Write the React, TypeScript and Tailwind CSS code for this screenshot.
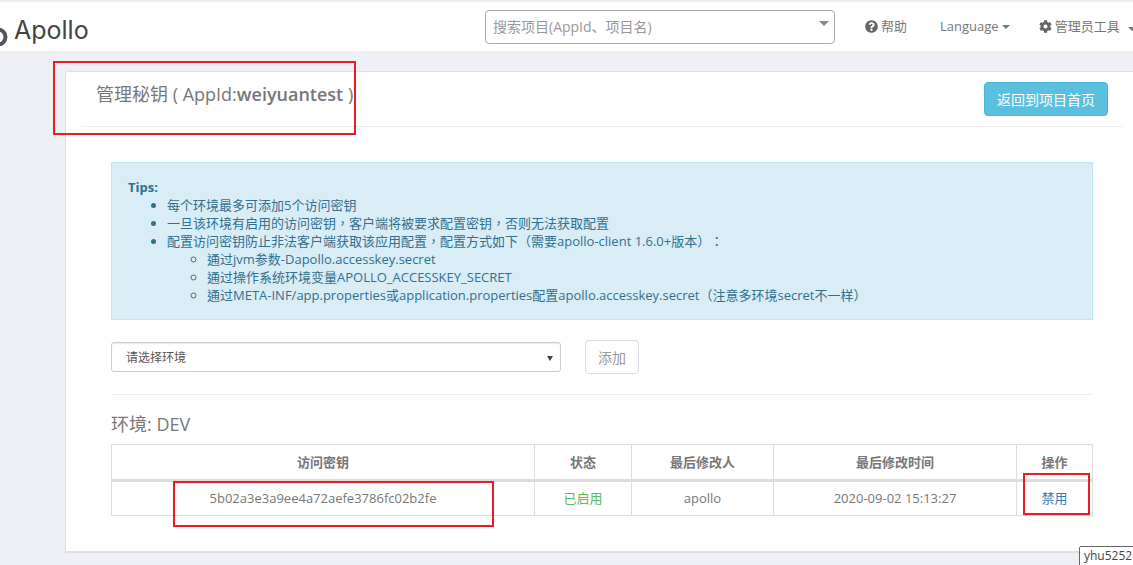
import React from "react"
import { FaCog, FaQuestionCircle } from "react-icons/fa"

const font = "[font-family:'Open_Sans','Noto_Sans_CJK_SC',sans-serif]"

function Caret() {
  return <span className="ml-[3px] inline-block border-x-4 border-t-4 border-x-transparent border-t-[#777]" />
}

function RedBox({ className }: { className: string }) {
  return <div className={`absolute border-[2px] border-[#ed1c24] ${className}`} />
}

function Nav() {
  return (
    <div className="flex h-[51px] items-center overflow-hidden border-t-2 border-[#eeeeee] bg-white text-[13px] text-[#777]">
      <div className="flex w-[485px] shrink-0 items-center">
        <svg width="8" height="20" viewBox="0 0 8 20" className="mt-[21px] shrink-0">
          <circle cx="-2" cy="10" r="7.5" fill="none" stroke="#555" strokeWidth="4" />
        </svg>
        <span className="ml-[6px] mt-[8px] text-[25px] leading-none text-[#444] [font-family:'Inter',sans-serif]">Apollo</span>
      </div>
      <div className="relative flex h-[34px] w-[350px] shrink-0 items-center rounded border border-[#aaa] pl-[7px] text-[14px] text-[#999]">
        搜索项目(AppId、项目名)
        <span className="absolute right-[5px] top-[10px] border-x-[5px] border-t-[5px] border-x-transparent border-t-[#888]" />
      </div>
      <div className="ml-[30px] flex shrink-0 items-center whitespace-nowrap">
        <FaQuestionCircle className="mr-[3px] text-[13px] text-[#666]" />
        帮助
      </div>
      <div className="ml-[33px] flex shrink-0 items-center whitespace-nowrap">Language<Caret /></div>
      <div className="ml-[29px] flex shrink-0 items-center whitespace-nowrap">
        <FaCog className="mr-[3px] text-[13px] text-[#666]" />
        管理员工具
        <span className="ml-[5px]"><Caret /></span>
      </div>
    </div>
  )
}

function Tips() {
  return (
    <div className="h-[158px] border border-[#bce8f1] bg-[#d9edf7] px-4 pt-[15px] text-[13px] leading-[18px] text-[#31708f] [font-family:'Open_Sans','Noto_Sans_CJK_TC',sans-serif] [text-spacing-trim:space-all]">
      <strong className="font-bold">Tips:</strong>
      <ul className="list-disc pl-[39px]">
        <li className="h-[18px]">每个环境最多可添加5个访问密钥</li>
        <li className="h-[18px]">一旦该环境有启用的访问密钥，客户端将被要求配置密钥，否则无法获取配置</li>
        <li>
          <div className="h-[18px]">配置访问密钥防止非法客户端获取该应用配置，配置方式如下（需要apollo-client 1.6.0+版本）：</div>
          <ul className="list-[circle] pl-[40px]">
            <li className="h-[18px]">通过jvm参数-Dapollo.accesskey.secret</li>
            <li className="h-[18px]">通过操作系统环境变量APOLLO_ACCESSKEY_SECRET</li>
            <li className="h-[18px]">通过META-INF/app.properties或application.properties配置apollo.accesskey.secret（注意多环境secret不一样）</li>
          </ul>
        </li>
      </ul>
    </div>
  )
}

function KeyTable() {
  const th = "border border-[#ddd] border-b-[3px] pt-px font-bold text-center align-middle"
  const td = "border border-[#ddd] text-center align-middle"
  return (
    <table className="w-[981px] table-fixed border-collapse text-[13px] text-[#777]">
      <colgroup>
        <col className="w-[423px]" />
        <col className="w-[97px]" />
        <col className="w-[142px]" />
        <col className="w-[243px]" />
        <col className="w-[76px]" />
      </colgroup>
      <thead>
        <tr className="h-[36px]">
          <th className={th}>访问密钥</th>
          <th className={th}>状态</th>
          <th className={th}>最后修改人</th>
          <th className={th}>最后修改时间</th>
          <th className={th}>操作</th>
        </tr>
      </thead>
      <tbody>
        <tr className="h-[35px]">
          <td className={td}>5b02a3e3a9ee4a72aefe3786fc02b2fe</td>
          <td className={`${td} text-[#5cb85c]`}>已启用</td>
          <td className={td}>apollo</td>
          <td className={td}>2020-09-02 15:13:27</td>
          <td className={`${td} text-[#337ab7]`}>禁用</td>
        </tr>
      </tbody>
    </table>
  )
}

export default function App() {
  return (
    <div className={`relative h-[565px] w-[1133px] overflow-hidden bg-[#eff0f5] ${font}`}>
      <Nav />
      <div className="ml-[65px] mt-[20px] h-[481px] rounded-tl-[3px] border border-r-0 border-[#e0e0e0] bg-white shadow-[0_1px_1px_rgba(0,0,0,0.08)]">
        <div className="ml-[15px] mr-[11px] flex h-[55px] items-start justify-between border-b border-[#eeeeee] pl-[15px] pr-[14px] pt-[10px]">
          <h4 className="text-[18px] leading-[24px] text-[#777]">
            管理秘钥 ( AppId:<b className="font-semibold">weiyuantest</b> )
          </h4>
          <button className="h-[34px] w-[124px] rounded border border-[#46b8da] bg-[#5bc0de] text-[14px] text-white">返回到项目首页</button>
        </div>
        <div className="ml-[45px] mr-[40px] pt-[35px]">
          <Tips />
          <div className="mt-[20px] flex items-center">
            <div className="relative flex h-[30px] w-[450px] items-center rounded-[3px] border border-[#ccc] pl-[14px] pt-px text-[12px] text-[#555] shadow-[inset_0_1px_1px_rgba(0,0,0,0.08)]">
              请选择环境
              <span className="absolute right-[7px] top-[13px] border-x-[3px] border-t-[5px] border-x-transparent border-t-[#444]" />
            </div>
            <button className="ml-[24px] h-[34px] w-[54px] rounded border border-[#ddd] bg-white text-[14px] text-[#999]">添加</button>
          </div>
          <div className="mt-[20px] border-t border-[#eeeeee]" />
          <h5 className="mt-[17px] text-[18px] leading-[24px] text-[#777]">环境: DEV</h5>
          <div className="mt-[8px]"><KeyTable /></div>
        </div>
      </div>
      <RedBox className="left-[53px] top-[61px] h-[74px] w-[303px]" />
      <RedBox className="left-[173px] top-[481px] h-[46px] w-[321px]" />
      <RedBox className="left-[1023px] top-[473px] h-[42px] w-[67px]" />
      <div className="absolute left-[1079px] top-[546px] h-[24px] w-[60px] rounded-tl-[2px] border border-[#666] bg-white pl-[4px] text-[12px] leading-[18px] text-[#444]">yhu5252</div>
    </div>
  )
}
